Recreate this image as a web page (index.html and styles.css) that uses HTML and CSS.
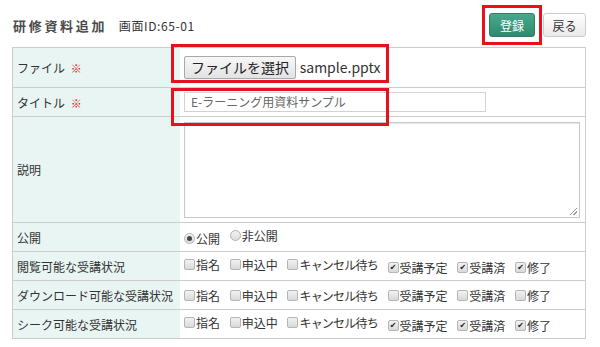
FILE: index.html
```html
<!DOCTYPE html>
<html lang="ja">
<head>
    <meta charset="UTF-8">
    <title>研修資料追加</title>
    <link rel="stylesheet" href="styles.css">
</head>
<body>
    <main class="page">
        <header class="page-head">
            <h1 class="page-title">研修資料追加 <span class="screen-id">画面ID:65-01</span></h1>
            <div class="actions">
                <span class="mark-box">
                    <button class="btn-primary">登録</button>
                </span>
                <button class="btn-back">戻る</button>
            </div>
        </header>
        <div class="form-wrap">
            <table class="form-table">
                <tr class="row-file">
                    <th>ファイル <span class="req">※</span></th>
                    <td>
                        <span class="file-btn">ファイルを選択</span>
                        <span class="file-name">sample.pptx</span>
                    </td>
                </tr>
                <tr>
                    <th>タイトル <span class="req">※</span></th>
                    <td><div class="text-input">E-ラーニング用資料サンプル</div></td>
                </tr>
                <tr class="row-desc">
                    <th>説明</th>
                    <td><div class="textarea"><span class="grip"></span></div></td>
                </tr>
                <tr>
                    <th>公開</th>
                    <td>
                        <span class="opt"><span class="radio on"></span>公開</span>
                        <span class="opt"><span class="radio"></span>非公開</span>
                    </td>
                </tr>
                <tr>
                    <th>閲覧可能な受講状況</th>
                    <td>
                        <span class="opt"><span class="cb"></span>指名</span>
                        <span class="opt"><span class="cb"></span>申込中</span>
                        <span class="opt"><span class="cb"></span><span class="kana">キャンセル待ち</span></span>
                        <span class="opt"><span class="cb on"></span>受講予定</span>
                        <span class="opt"><span class="cb on"></span>受講済</span>
                        <span class="opt"><span class="cb on"></span>修了</span>
                    </td>
                </tr>
                <tr>
                    <th>ダウンロード可能な受講状況</th>
                    <td>
                        <span class="opt"><span class="cb"></span>指名</span>
                        <span class="opt"><span class="cb"></span>申込中</span>
                        <span class="opt"><span class="cb"></span><span class="kana">キャンセル待ち</span></span>
                        <span class="opt"><span class="cb"></span>受講予定</span>
                        <span class="opt"><span class="cb"></span>受講済</span>
                        <span class="opt"><span class="cb"></span>修了</span>
                    </td>
                </tr>
                <tr>
                    <th>シーク可能な受講状況</th>
                    <td>
                        <span class="opt"><span class="cb"></span>指名</span>
                        <span class="opt"><span class="cb"></span>申込中</span>
                        <span class="opt"><span class="cb"></span><span class="kana">キャンセル待ち</span></span>
                        <span class="opt"><span class="cb on"></span>受講予定</span>
                        <span class="opt"><span class="cb on"></span>受講済</span>
                        <span class="opt"><span class="cb on"></span>修了</span>
                    </td>
                </tr>
            </table>
            <!-- annotation frames -->
            <span class="mark mark-file"></span>
            <span class="mark mark-title"></span>
        </div>
    </main>
</body>
</html>
```

FILE: styles.css
```css
html, body {
    margin: 0;
    padding: 0;
    background: #fff;
    color: #333;
    font-family: "Noto Sans CJK JP", "DejaVu Sans", sans-serif;
    font-size: 12px;
}
.page {
    width: 574px;
    padding: 0 0 0 12px;
}
.page-head {
    display: flex;
    justify-content: space-between;
    align-items: center;
    height: 47px;
    padding-top: 3px;
    box-sizing: border-box;
}
.page-title {
    margin: 0;
    padding-left: 1px;
    font-size: 13px;
    font-weight: bold;
    color: #4a4a4a;
    letter-spacing: 2.7px;
}
.screen-id {
    margin-left: 6px;
    font-size: 12px;
    font-weight: normal;
    letter-spacing: 0.6px;
    color: #333;
}
.actions {
    display: flex;
    align-items: center;
}
.mark-box {
    display: flex;
    align-items: center;
    justify-content: center;
    width: 54px;
    height: 34px;
    border: 3px solid #e8101c;
}
.btn-primary {
    width: 46px;
    height: 24px;
    padding: 0;
    border: 1px solid #2f7d66;
    border-radius: 3px;
    background: linear-gradient(#49a98c, #2f8a6e);
    color: #fff;
    font-family: inherit;
    font-size: 12px;
}
.btn-back {
    margin-left: 1px;
    width: 43px;
    height: 24px;
    padding: 0;
    border: 1px solid #ccc;
    border-radius: 3px;
    background: linear-gradient(#fff, #e9e9e9);
    color: #333;
    font-family: inherit;
    font-size: 12px;
}
.form-wrap {
    position: relative;
}
.form-table {
    width: 574px;
    border-collapse: collapse;
}
.form-table th,
.form-table td {
    border: 1px solid #ccc;
    height: 28px;
    padding: 0 0 0 4px;
    vertical-align: middle;
}
.form-table th {
    width: 162px;
    background: #e8f5f2;
    border-right-color: #e8f5f2;
    font-weight: normal;
    text-align: left;
    white-space: nowrap;
}
.form-table td {
    padding-left: 4px;
}
.row-file th,
.row-file td {
    height: 39px;
}
.row-desc th,
.row-desc td {
    height: 105px;
}
.req {
    color: #e02020;
    font-size: 11px;
    margin-left: 3px;
}
.file-btn {
    display: inline-block;
    box-sizing: border-box;
    height: 23px;
    padding: 0 6px;
    line-height: 21px;
    border: 1px solid #a9a9a9;
    border-radius: 2px;
    background: linear-gradient(#f8f8f8, #e3e3e3);
    color: #222;
    font-size: 14px;
}
.file-name {
    margin-left: 1px;
    font-size: 14px;
    color: #333;
}
.text-input {
    box-sizing: border-box;
    width: 302px;
    height: 20px;
    padding-left: 6px;
    line-height: 18px;
    border: 1px solid #d2d2d2;
    color: #666;
    font-size: 12px;
}
.textarea {
    position: relative;
    box-sizing: border-box;
    width: 396px;
    height: 96px;
    border: 1px solid #c8c8c8;
    box-shadow: inset 0 1px 1px #e6e6e6;
}
.grip {
    position: absolute;
    right: 2px;
    bottom: 2px;
    width: 7px;
    height: 7px;
    background: linear-gradient(135deg, transparent 45%, #999 46%, #999 54%, transparent 55%, transparent 70%, #999 71%, #999 79%, transparent 80%);
}
.opt {
    display: inline-flex;
    align-items: center;
    margin-right: 7px;
    white-space: nowrap;
}
.kana {
    letter-spacing: -0.8px;
}
.cb {
    display: inline-flex;
    align-items: center;
    justify-content: center;
    box-sizing: border-box;
    width: 11px;
    height: 11px;
    margin-right: 1px;
    border: 1px solid #b5b5b5;
    border-radius: 2px;
    background: linear-gradient(#f2f2f2, #d9d9d9);
    font-size: 8px;
    line-height: 1;
    color: #222;
}
.cb.on::after {
    content: "✔";
}
.radio {
    display: inline-flex;
    align-items: center;
    justify-content: center;
    box-sizing: border-box;
    width: 11px;
    height: 11px;
    margin-right: 1px;
    border: 1px solid #b5b5b5;
    border-radius: 50%;
    background: linear-gradient(#f2f2f2, #dcdcdc);
}
.radio.on::after {
    content: "";
    width: 5px;
    height: 5px;
    border-radius: 50%;
    background: #444;
}
.mark {
    position: absolute;
    border: 3px solid #e8101c;
}
.mark-file {
    left: 159px;
    top: -3px;
    width: 212px;
    height: 33px;
}
.mark-title {
    left: 159px;
    top: 41px;
    width: 212px;
    height: 32px;
}
```
